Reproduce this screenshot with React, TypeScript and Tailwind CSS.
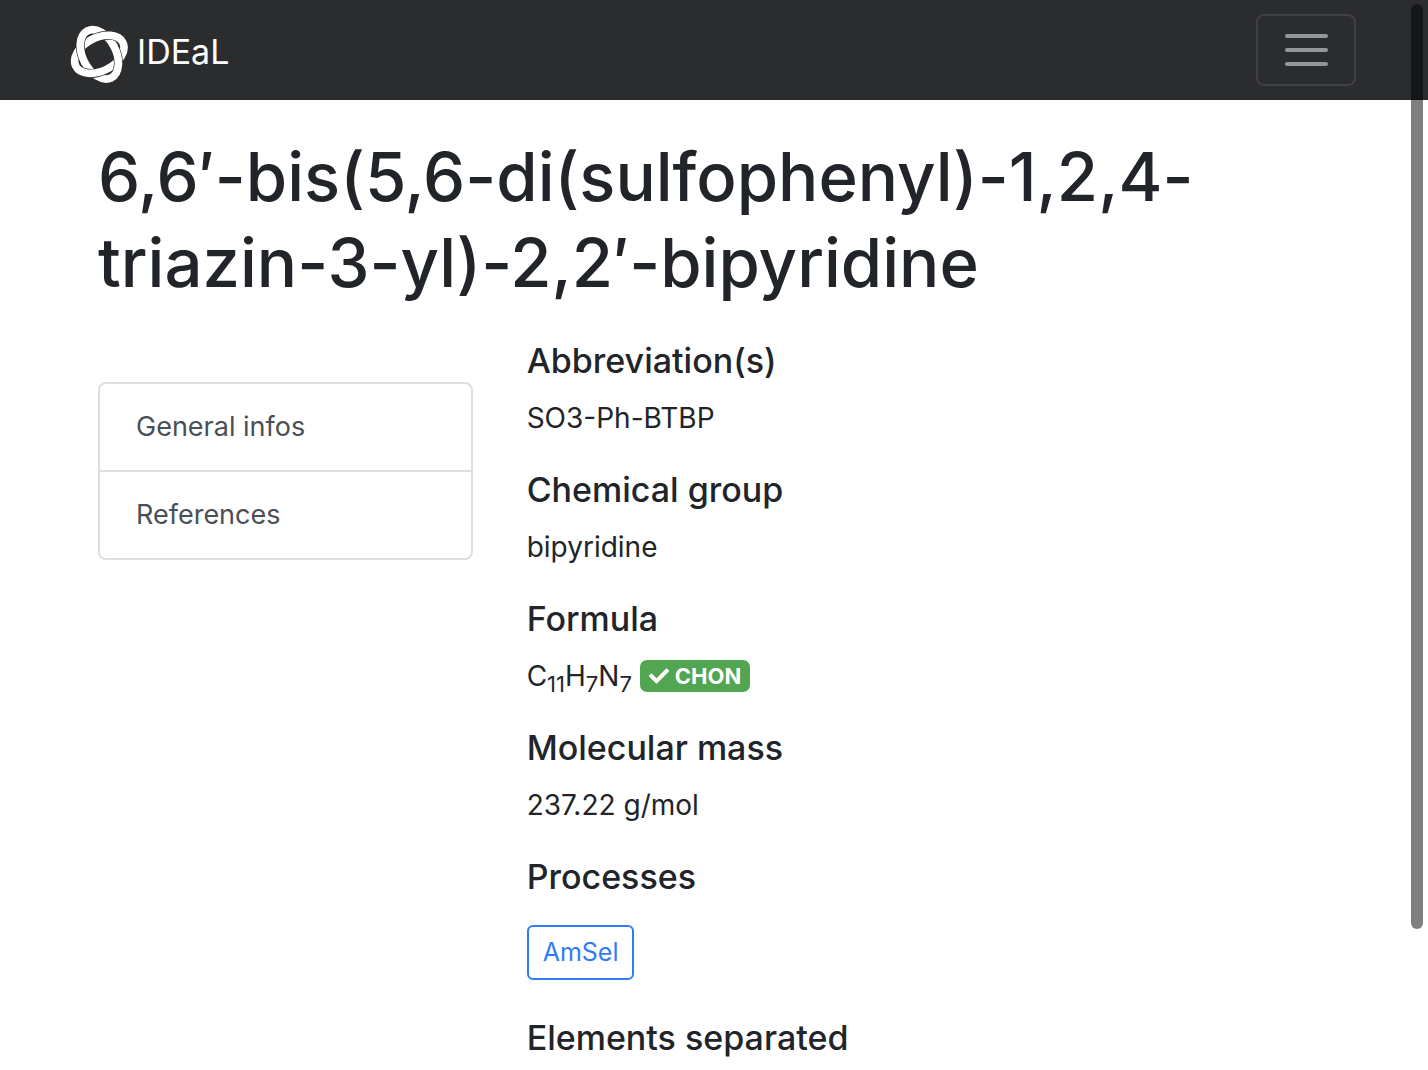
import type { ReactNode } from "react";

function Logo() {
  return (
    <svg viewBox="30 32 177 177" className="size-[59px]" fill="none" aria-hidden="true">
      <defs>
        <clipPath id="overlap">
          <path d="M0 0H-120V120H0Z M0 0H120V-120H0Z" />
        </clipPath>
        <clipPath id="overlap-wide">
          <path d="M3 -3H-120V120H3Z M-3 3H120V-120H-3Z" />
        </clipPath>
      </defs>
      <g transform="translate(118 120) rotate(63)">
        <ellipse rx="79" ry="50" stroke="#ffffff" strokeWidth="23" />
        <g transform="rotate(-90)">
          <ellipse rx="79" ry="50" stroke="#2b2c2e" strokeWidth="27" />
          <ellipse rx="79" ry="50" stroke="#ffffff" strokeWidth="23" />
        </g>
        <ellipse rx="79" ry="50" stroke="#2b2c2e" strokeWidth="27" clipPath="url(#overlap)" />
        <ellipse rx="79" ry="50" stroke="#ffffff" strokeWidth="23" clipPath="url(#overlap-wide)" />
      </g>
    </svg>
  );
}

function Field({ title, children }: { title: string; children: ReactNode }) {
  return (
    <section className="mb-7">
      <h2 className="mb-[14px] text-[34px] leading-[43px] font-medium">{title}</h2>
      <div className="text-[28px] leading-[44px]">{children}</div>
    </section>
  );
}

export default function App() {
  return (
    <div className="bg-white font-['Inter',sans-serif] text-[#212529]">
      <nav className="flex h-[100px] items-center justify-between bg-[#2b2c2e] pr-[72px] pl-[70px]">
        <a href="#" className="flex items-center gap-2 pt-2 text-[34px] leading-[54px] text-white">
          <Logo />
          <span className="pb-1">IDEaL</span>
        </a>
        <button
          type="button"
          aria-label="Toggle navigation"
          className="flex h-[72px] w-[100px] flex-col items-center justify-center gap-[10px] rounded-[8px] border-2 border-[#404143]"
        >
          <span className="h-1 w-[43px] rounded-full bg-[#959697]" />
          <span className="h-1 w-[43px] rounded-full bg-[#959697]" />
          <span className="h-1 w-[43px] rounded-full bg-[#959697]" />
        </button>
      </nav>

      <main className="px-[98px] pt-[34px]">
        <h1 className="text-[67px] leading-[86px] font-medium">
          6,6′-bis(5,6-di(sulfophenyl)-1,2,4-triazin-3-yl)-2,2′-bipyridine
        </h1>
        <div className="mt-[33px] grid grid-cols-3 items-start gap-[54px]">
          <ul className="mt-[43px] divide-y-2 divide-[#dfdfdf] rounded-[8px] border-2 border-[#dfdfdf] text-[27px] leading-[44px] text-[#495057]">
            <li>
              <a href="#general" className="block px-9 py-[21px]">General infos</a>
            </li>
            <li>
              <a href="#references" className="block px-9 py-[21px]">References</a>
            </li>
          </ul>
          <div className="col-span-2">
            <Field title="Abbreviation(s)">SO3-Ph-BTBP</Field>
            <Field title="Chemical group">bipyridine</Field>
            <Field title="Formula">
              <div className="flex items-center gap-2">
                <span>
                  C<sub className="text-[22px]">11</sub>H<sub className="text-[22px]">7</sub>N
                  <sub className="text-[22px]">7</sub>
                </span>
                <span className="flex h-8 items-center gap-[6px] rounded-[7px] bg-[#52a551] px-[9px] text-[22px] leading-8 font-bold text-white">
                  <svg viewBox="0 0 512 512" className="size-5" fill="currentColor" aria-hidden="true">
                    <path d="M173.898 439.404l-166.4-166.4c-9.997-9.997-9.997-26.206 0-36.204l36.203-36.204c9.997-9.998 26.207-9.998 36.204 0L192 312.69 432.095 72.596c9.997-9.997 26.207-9.997 36.204 0l36.203 36.204c9.997 9.997 9.997 26.206 0 36.204l-294.4 294.401c-9.998 9.997-26.207 9.997-36.204-.001z" />
                  </svg>
                  CHON
                </span>
              </div>
            </Field>
            <Field title="Molecular mass">237.22 g/mol</Field>
            <section>
              <h2 className="text-[34px] leading-[43px] font-medium">Processes</h2>
              <a
                href="#amsel"
                className="mt-[27px] mb-9 inline-block rounded-[6px] border-2 border-[#2f7cf6] px-[14px] py-[7px] text-[25px] leading-[37px] text-[#2f7cf6]"
              >
                AmSel
              </a>
            </section>
            <h2 className="text-[34px] leading-[43px] font-medium">Elements separated</h2>
          </div>
        </div>
      </main>

      <div className="pointer-events-none fixed top-1 right-[5px] h-[925px] w-3 rounded-full bg-black/50" />
    </div>
  );
}
